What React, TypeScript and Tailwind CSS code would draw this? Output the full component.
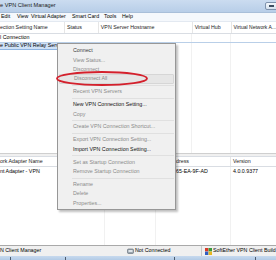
import React from 'react';

type MenuItem = { label: string; tone: 'on' | 'off' | 'dim'; sepBefore?: boolean; hover?: boolean };

const menuItems: MenuItem[] = [
  { label: 'Connect', tone: 'dim' },
  { label: 'View Status...', tone: 'off' },
  { label: 'Disconnect', tone: 'off' },
  { label: 'Disconnect All', tone: 'off', hover: true },
  { label: 'Recent VPN Servers', tone: 'off', sepBefore: true },
  { label: 'New VPN Connection Setting...', tone: 'on', sepBefore: true },
  { label: 'Copy', tone: 'off' },
  { label: 'Create VPN Connection Shortcut...', tone: 'off', sepBefore: true },
  { label: 'Export VPN Connection Setting...', tone: 'off', sepBefore: true },
  { label: 'Import VPN Connection Setting...', tone: 'on' },
  { label: 'Set as Startup Connection', tone: 'off', sepBefore: true },
  { label: 'Remove Startup Connection', tone: 'off' },
  { label: 'Rename', tone: 'off', sepBefore: true },
  { label: 'Delete', tone: 'off' },
  { label: 'Properties...', tone: 'off' },
];

const toneClass = {
  on: 'text-[#111]',
  dim: 'text-[#3c3c3c]',
  off: 'text-[#8a8a8a]',
};

const ContextMenu: React.FC = () => (
  <div className="absolute left-[57px] top-[43px] w-[119px] h-[167px] bg-[#f0f0f0] border border-[#979797] shadow-[2px_2px_2px_rgba(0,0,0,0.25)] pt-[2.2px] px-[1px]">
    {menuItems.map((item) => (
      <React.Fragment key={item.label}>
        {item.sepBefore && (
          <div className="h-[3.5px] flex items-center pl-[13px]">
            <div className="w-full h-px bg-[#e0e0e0]" />
          </div>
        )}
        <div
          className={`h-[9.4px] flex items-center pl-[14px] whitespace-nowrap ${toneClass[item.tone]} ${
            item.hover ? 'bg-[#e6e6e6] border border-[#d6d6d6] rounded-[1px] pl-[13px]' : ''
          }`}
        >
          {item.label}
        </div>
      </React.Fragment>
    ))}
  </div>
);

const SoftEtherIcon: React.FC = () => (
  <svg width="7" height="7" viewBox="0 0 7 7">
    <rect x="0" y="0" width="3.4" height="3.4" fill="#d83a2a" />
    <rect x="3.6" y="0" width="3.4" height="3.4" fill="#3b9a3a" />
    <rect x="0" y="3.6" width="3.4" height="3.4" fill="#2f5fc4" />
    <rect x="3.6" y="3.6" width="3.4" height="3.4" fill="#e7b720" />
  </svg>
);

const PlugIcon: React.FC = () => (
  <svg width="7" height="7" viewBox="0 0 7 7">
    <rect x="0.5" y="1" width="6" height="4.5" rx="1" fill="#9aa4ae" stroke="#5d6670" strokeWidth="0.6" />
    <rect x="1.5" y="2" width="4" height="2" fill="#dfe5ea" />
  </svg>
);

export default function App() {
  return (
    <div
      className="relative w-[276px] h-[260px] overflow-hidden bg-white flex flex-col text-[5.3px] leading-none text-black"
      style={{ fontFamily: '"Liberation Sans", Arial, sans-serif' }}
    >
      {/* Title bar */}
      <div className="h-[13px] flex items-center justify-between bg-gradient-to-b from-[#cbdcf0] to-[#b8cee8] border-b border-[#a9bfd9]">
        <span className="text-[5.6px] text-[#1b1b1b]">e VPN Client Manager</span>
        <div className="w-[14px] h-[8px] -mr-[3px] rounded-[2px] border border-[#7f93ad] bg-gradient-to-b from-[#f4f8fc] to-[#d5e1ee] flex items-center pl-[3px]">
          <div className="w-[5px] h-[1.5px] bg-[#3d4d60]" />
        </div>
      </div>

      {/* Menu bar */}
      <div className="h-[9px] flex items-center bg-[#f5f8fc] border-b border-[#e3e9f1] whitespace-nowrap">
        <div className="w-[17px] pl-[1px]">Edit</div>
        <div className="w-[14px]">View</div>
        <div className="w-[41px]">Virtual Adapter</div>
        <div className="w-[32px]">Smart Card</div>
        <div className="w-[18px]">Tools</div>
        <div>Help</div>
      </div>

      {/* Upper list header */}
      <div className="h-[12px] flex items-center border-b border-[#d9dde3] whitespace-nowrap text-[#222]">
        <div className="w-[65px] h-full flex items-center border-r border-[#e6e6e6]">ection Setting Name</div>
        <div className="w-[34px] h-full flex items-center pl-[2px] border-r border-[#e6e6e6]">Status</div>
        <div className="w-[94px] h-full flex items-center pl-[2px] border-r border-[#e6e6e6]">VPN Server Hostname</div>
        <div className="w-[39px] h-full flex items-center pl-[2px] border-r border-[#e6e6e6]">Virtual Hub</div>
        <div className="flex-1 h-full flex items-center pl-[2px] text-[5px]">Virtual Network A...</div>
      </div>

      {/* Upper list body */}
      <div className="relative flex-1 flex flex-col">
        <div className="absolute inset-0 flex pointer-events-none">
          <div className="w-[192px] border-r border-[#f1f1f1]" />
          <div className="w-[39px] border-r border-[#f1f1f1]" />
        </div>
        <div className="relative h-[8px] flex items-center whitespace-nowrap">l Connection</div>
        <div className="relative h-[8px] flex items-center whitespace-nowrap border-t border-[#b9cfe8]">
          <span className="h-full flex items-center bg-[#cfe1f6] border-b border-r border-[#8fb4e0] pr-[2px]">
            e Public VPN Relay Server
          </span>
        </div>
      </div>

      {/* Splitter */}
      <div className="h-[3px] bg-[#f0f0f0] border-t border-[#cfcfcf]" />

      {/* Lower list header */}
      <div className="h-[11px] flex items-center border-y border-[#d9dde3] whitespace-nowrap text-[#222]">
        <div className="w-[105px] h-full flex items-center border-r border-[#e6e6e6]">ork Adapter Name</div>
        <div className="w-[51px] h-full border-r border-[#e6e6e6]" />
        <div className="w-[75px] h-full flex items-center pl-[20px] border-r border-[#e6e6e6]">dress</div>
        <div className="flex-1 h-full flex items-center pl-[2px]">Version</div>
      </div>

      {/* Lower list body */}
      <div className="relative h-[78px] flex flex-col">
        <div className="absolute inset-0 flex pointer-events-none">
          <div className="w-[105px] border-r border-[#f1f1f1]" />
          <div className="w-[51px] border-r border-[#f1f1f1]" />
          <div className="w-[75px] border-r border-[#f1f1f1]" />
        </div>
        <div className="relative h-[10px] flex items-center whitespace-nowrap">
          <div className="w-[105px]">nt Adapter - VPN</div>
          <div className="w-[51px]" />
          <div className="w-[75px] pl-[20px]">65-EA-9F-AD</div>
          <div className="pl-[2px]">4.0.0.9377</div>
        </div>
      </div>

      {/* Status bar */}
      <div className="h-[11px] flex items-center bg-[#f0f0f0] border-t border-[#a9a9a9] whitespace-nowrap">
        <div className="w-[127px]">N Client Manager</div>
        <div className="w-[75px] flex items-center gap-[1px] border-r border-[#c8c8c8] h-full">
          <PlugIcon />
          <span>Not Connected</span>
        </div>
        <div className="flex items-center gap-[1px] pl-[3px]">
          <SoftEtherIcon />
          <span>SoftEther VPN Client Build</span>
        </div>
      </div>

      {/* Window bottom frame */}
      <div className="h-[4px] bg-gradient-to-b from-[#c7d9ee] to-[#b3cbe6] flex items-end">
        <div className="w-[10px]" />
        <div className="w-px h-[3px] bg-[#4b5a6c]" />
        <div className="w-[54px]" />
        <div className="w-px h-[3px] bg-[#4b5a6c]" />
        <div className="w-[108px]" />
        <div className="w-px h-[3px] bg-[#4b5a6c]" />
        <div className="w-[80px]" />
        <div className="w-px h-[3px] bg-[#4b5a6c]" />
      </div>

      <ContextMenu />

      {/* Red highlight ellipse */}
      <svg className="absolute left-0 top-0 pointer-events-none" width="276" height="260">
        <ellipse cx="102" cy="78.5" rx="45" ry="6.5" fill="none" stroke="#d4202c" strokeWidth="1.9" />
      </svg>
    </div>
  );
}
